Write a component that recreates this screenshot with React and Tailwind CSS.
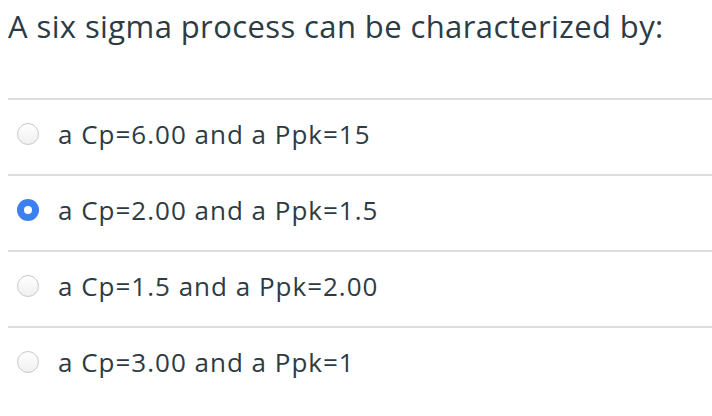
import React, { useState } from 'react';

const options = [
  'a Cp=6.00 and a Ppk=15',
  'a Cp=2.00 and a Ppk=1.5',
  'a Cp=1.5 and a Ppk=2.00',
  'a Cp=3.00 and a Ppk=1',
];

function Radio({ checked }) {
  if (checked) {
    return (
      <span className="flex h-[22px] w-[22px] shrink-0 items-center justify-center rounded-full bg-[#3b7ff0]">
        <span className="h-[8px] w-[8px] rounded-full bg-white" />
      </span>
    );
  }
  return (
    <span className="h-[22px] w-[22px] shrink-0 rounded-full border border-[#c9c9c9] bg-gradient-to-b from-white to-[#f0f0f0]" />
  );
}

function App() {
  const [selected, setSelected] = useState(1);

  return (
    <div className="min-h-screen bg-white pl-2 text-[#2d3b45]" style={{ fontFamily: '"Open Sans", Lato, sans-serif' }}>
      {/* Question */}
      <h1 className="h-[98px] pt-[4px] text-[31px] font-normal leading-[44px] tracking-[0.4px]">
        A six sigma process can be characterized by:
      </h1>

      {/* Answers */}
      {options.map((opt, i) => (
        <label
          key={i}
          onClick={() => setSelected(i)}
          className="flex h-[76px] cursor-pointer items-center gap-[19px] border-t-2 border-[#dddddd] pb-[6px] pl-[9px]"
        >
          <Radio checked={selected === i} />
          <span className="text-[26px] leading-none tracking-[1px]">{opt}</span>
        </label>
      ))}
    </div>
  );
}

export default App;
